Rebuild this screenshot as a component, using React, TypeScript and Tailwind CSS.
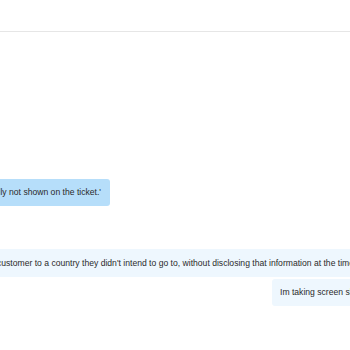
import React from "react";

export default function App() {
  return (
    <div
      className="w-[350px] h-[350px] overflow-hidden bg-white text-[8.6px] leading-[11px] text-[#2a2a2a]"
      style={{ fontFamily: '"Liberation Sans", Arial, sans-serif' }}
    >
      <div className="h-[32px] border-b border-[#e6e6e6]" />
      <div className="flex flex-col">
        <div className="mt-[147px] flex w-[110px] justify-end">
          <div className="shrink-0 whitespace-nowrap rounded-[3px] bg-[#b6defa] px-[9px] py-[8px]">
            'The destination country was actually not shown on the ticket.'
          </div>
        </div>
        <div className="mt-[43px] flex">
          <div className="ml-[-11px] shrink-0 whitespace-nowrap rounded-[3px] bg-[#eef7fe] px-[8px] py-[8.5px]">
            customer to a country they didn't intend to go to, without disclosing that information at the time of booking.
          </div>
        </div>
        <div className="mt-[2px] flex pl-[272px]">
          <div className="shrink-0 whitespace-nowrap rounded-[3px] bg-[#eef7fe] px-[8px] py-[8px]">
            Im taking screen shots of this conversation
          </div>
        </div>
      </div>
    </div>
  );
}
